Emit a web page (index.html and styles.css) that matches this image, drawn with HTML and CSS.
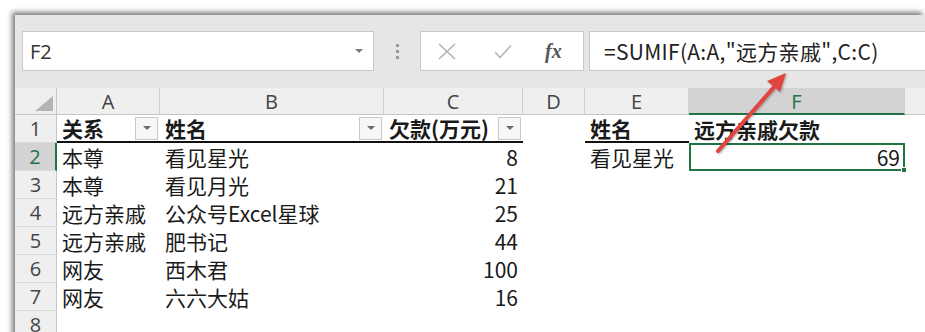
FILE: index.html
```html
<!DOCTYPE html>
<html lang="zh-CN">
<head>
    <meta charset="UTF-8">
    <title>SUMIF</title>
    <link rel="stylesheet" href="styles.css">
</head>
<body>
    <div class="window">
        <!-- formula bar -->
        <div class="formulaBar">
            <div class="nameBox">
                <span>F2</span>
                <span class="caret"></span>
            </div>
            <div class="grip"><i></i><i></i><i></i></div>
            <div class="fxButtons">
                <svg width="18" height="17" viewBox="0 0 18 17"><path d="M1 1 L17 16 M17 1 L1 16" stroke="#b3b3b3" stroke-width="1.6" fill="none"/></svg>
                <svg width="18" height="15" viewBox="0 0 18 15"><path d="M1 8 L6 13.5 L17 1.5" stroke="#bdbdbd" stroke-width="1.8" fill="none"/></svg>
                <span class="fx">fx</span>
            </div>
            <div class="formula">=SUMIF(A:A,"远方亲戚",C:C)</div>
        </div>

        <!-- sheet -->
        <div class="sheet">
            <div class="corner"><span></span></div>
            <div class="ch">A</div>
            <div class="ch">B</div>
            <div class="ch">C</div>
            <div class="ch">D</div>
            <div class="ch">E</div>
            <div class="ch sel">F</div>
            <div class="ch last"></div>

            <div class="rh">1</div>
            <div class="c hd">关系<span class="filter"></span></div>
            <div class="c hd">姓名<span class="filter"></span></div>
            <div class="c hd">欠款(万元)<span class="filter"></span></div>
            <div class="c"></div>
            <div class="c hd">姓名</div>
            <div class="c bold">远方亲戚欠款</div>
            <div class="c"></div>

            <div class="rh sel">2</div>
            <div class="c">本尊</div>
            <div class="c">看见星光</div>
            <div class="c num">8</div>
            <div class="c"></div>
            <div class="c">看见星光</div>
            <div class="c num active">69<span class="handle"></span></div>
            <div class="c"></div>

            <div class="rh">3</div>
            <div class="c">本尊</div>
            <div class="c">看见月光</div>
            <div class="c num">21</div>
            <div class="c"></div><div class="c"></div><div class="c"></div><div class="c"></div>

            <div class="rh">4</div>
            <div class="c">远方亲戚</div>
            <div class="c">公众号Excel星球</div>
            <div class="c num">25</div>
            <div class="c"></div><div class="c"></div><div class="c"></div><div class="c"></div>

            <div class="rh">5</div>
            <div class="c">远方亲戚</div>
            <div class="c">肥书记</div>
            <div class="c num">44</div>
            <div class="c"></div><div class="c"></div><div class="c"></div><div class="c"></div>

            <div class="rh">6</div>
            <div class="c">网友</div>
            <div class="c">西木君</div>
            <div class="c num">100</div>
            <div class="c"></div><div class="c"></div><div class="c"></div><div class="c"></div>

            <div class="rh">7</div>
            <div class="c">网友</div>
            <div class="c">六六大姑</div>
            <div class="c num">16</div>
            <div class="c"></div><div class="c"></div><div class="c"></div><div class="c"></div>

            <div class="rh">8</div>
            <div class="c"></div><div class="c"></div><div class="c"></div><div class="c"></div><div class="c"></div><div class="c"></div><div class="c"></div>
        </div>
    </div>

    <!-- red pointer arrow drawn over the screenshot -->
    <svg class="arrow" width="925" height="332" viewBox="0 0 925 332">
        <line x1="718" y1="151" x2="774" y2="87" stroke="#e2453d" stroke-width="4" stroke-linecap="round"/>
        <polygon points="786,73 780,92 767,81" fill="#e2453d"/>
    </svg>
</body>
</html>
```

FILE: styles.css
```css
* {
    margin: 0;
    padding: 0;
    box-sizing: border-box;
}
body {
    background-color: white;
    width: 925px;
    height: 332px;
    overflow: hidden;
    position: relative;
    font-family: "Noto Sans CJK SC", "Noto Sans", sans-serif;
    color: #1a1a1a;
}
.window {
    margin: 15px 0 0 15px;
    height: 340px;
    background-color: #e6e6e6;
    box-shadow: -3px -3px 5px rgba(0, 0, 0, 0.5);
}

/* formula bar */
.formulaBar {
    display: flex;
    height: 73px;
    padding: 16px 0 17px 7px;
}
.nameBox {
    width: 352px;
    background-color: white;
    border: 1px solid #c8c8c8;
    display: flex;
    align-items: center;
    justify-content: space-between;
    padding: 0 10px 0 7px;
    font-family: "Open Sans", sans-serif;
    font-size: 20px;
    color: #333;
}
.caret {
    border-left: 4px solid transparent;
    border-right: 4px solid transparent;
    border-top: 4px solid #7a7a7a;
}
.grip {
    width: 46px;
    display: flex;
    flex-direction: column;
    align-items: center;
    justify-content: center;
    gap: 3px;
}
.grip i {
    width: 3px;
    height: 3px;
    background-color: #9a9a9a;
}
.fxButtons {
    width: 164px;
    background-color: white;
    border: 1px solid #c8c8c8;
    display: flex;
    align-items: center;
    padding-left: 17px;
    gap: 38px;
}
.fx {
    font-family: "Liberation Serif", serif;
    font-style: italic;
    font-weight: bold;
    font-size: 20px;
    color: #555;
    margin-left: -5px;
}
.formula {
    flex: 1;
    margin-left: 5px;
    background-color: white;
    border: 1px solid #c8c8c8;
    border-right: none;
    display: flex;
    align-items: center;
    padding-left: 14px;
    font-size: 21px;
    letter-spacing: 0.3px;
    color: #222;
}

/* sheet */
.sheet {
    display: grid;
    grid-template-columns: 42px 103px 224px 139px 62px 104px 216px 1fr;
    grid-template-rows: 27px;
    grid-auto-rows: 28px;
    background-color: white;
}
.corner {
    background-color: #efefef;
    border-right: 1px solid #c6c6c6;
    border-bottom: 1px solid #c6c6c6;
    display: flex;
    justify-content: flex-end;
    align-items: flex-end;
    padding: 0 3px 3px 0;
}
.corner span {
    width: 18px;
    height: 15px;
    background-color: #b4b4b4;
    clip-path: polygon(100% 0, 100% 100%, 0 100%);
}
.ch {
    background-color: #efefef;
    border-right: 1px solid #d0d0d0;
    border-bottom: 1px solid #c6c6c6;
    text-align: center;
    font-family: "Open Sans", sans-serif;
    font-size: 20px;
    line-height: 27px;
    color: #444;
}
.ch.last {
    border-right: none;
}
.ch.sel {
    background-color: #d3d3d3;
    color: #217346;
    border-bottom: 2px solid #217346;
}
.rh {
    background-color: #efefef;
    border-right: 1px solid #c6c6c6;
    border-bottom: 1px solid #dadada;
    text-align: center;
    font-family: "Open Sans", sans-serif;
    font-size: 20px;
    line-height: 27px;
    color: #444;
}
.rh.sel {
    background-color: #d3d3d3;
    color: #217346;
    border-right: 2px solid #217346;
}
.c {
    display: flex;
    align-items: center;
    justify-content: space-between;
    padding: 0 5px;
    font-size: 21px;
    line-height: 1;
    white-space: nowrap;
    position: relative;
}
.c.num {
    justify-content: flex-end;
}
.c.hd {
    font-weight: bold;
    border-bottom: 2px solid #111;
    padding-right: 2px;
}
.c.bold {
    font-weight: bold;
}
.filter {
    width: 23px;
    height: 23px;
    border: 1px solid #c8c8c8;
    background-color: #f7f7f7;
    display: flex;
    align-items: center;
    justify-content: center;
}
.filter::after {
    content: "";
    border-left: 4px solid transparent;
    border-right: 4px solid transparent;
    border-top: 4px solid #6a6a6a;
}
.c.active {
    border: 2px solid #217346;
    padding-right: 3px;
}
.handle {
    position: absolute;
    right: -4px;
    bottom: -4px;
    width: 6px;
    height: 6px;
    background-color: #217346;
    border: 1px solid white;
}
.arrow {
    position: absolute;
    left: 0;
    top: 0;
    pointer-events: none;
    filter: drop-shadow(1px 1px 1px rgba(0, 0, 0, 0.3));
}
```
